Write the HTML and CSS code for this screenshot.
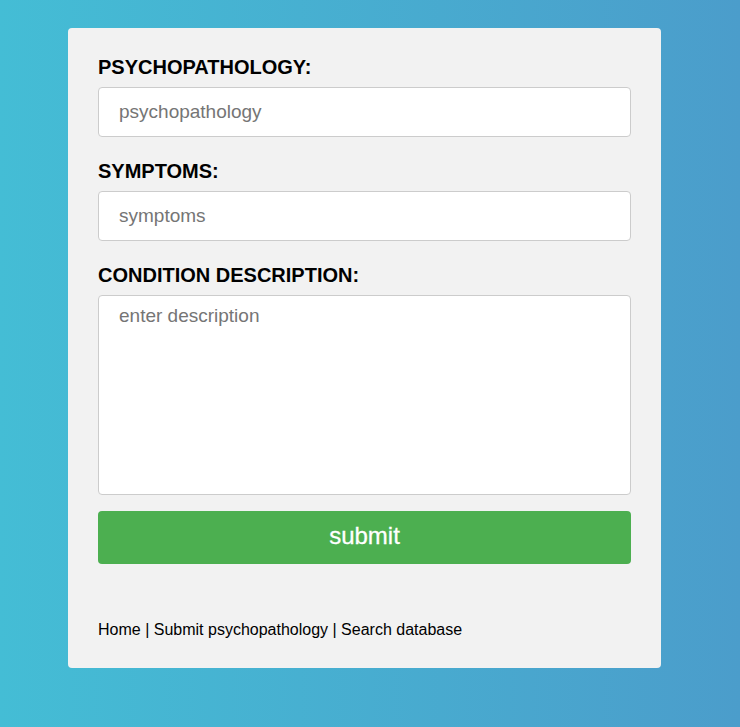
FILE: index.html
```html
<!DOCTYPE html>
<html>
<head>
<meta charset="utf-8">
<link rel="stylesheet" href="styles.css">
</head>
<body>
<div class="card">
  <form class="form">
    <label class="label" for="p">PSYCHOPATHOLOGY:</label>
    <input class="field" id="p" type="text" placeholder="psychopathology">
    <label class="label" for="s">SYMPTOMS:</label>
    <input class="field" id="s" type="text" placeholder="symptoms">
    <label class="label" for="d">CONDITION DESCRIPTION:</label>
    <textarea class="area" id="d" placeholder="enter description"></textarea>
    <button class="btn" type="button">submit</button>
  </form>
  <p class="footer"><a href="#">Home</a> | <a href="#">Submit psychopathology</a> | <a href="#">Search database</a></p>
</div>
</body>
</html>
```
FILE: styles.css
```css
html, body {
  margin: 0;
  min-height: 100%;
}
body {
  font-family: "Liberation Sans", Arial, Helvetica, sans-serif;
  background: linear-gradient(to right, #44bdd5, #4b9dcb);
  min-height: 727px;
  padding: 28px 11px 0 0;
  box-sizing: border-box;
}
.card {
  width: 593px;
  margin: 0 auto;
  box-sizing: border-box;
  background: #f2f2f2;
  border-radius: 4px;
  padding: 28px 30px 29px;
}
.form {
  display: flex;
  flex-direction: column;
}
.label {
  display: block;
  font-size: 20px;
  font-weight: bold;
  line-height: 23px;
  color: #000;
  margin-bottom: 8px;
}
.field {
  height: 50px;
  box-sizing: border-box;
  border: 1px solid #ccc;
  border-radius: 4px;
  background: #fff;
  padding: 0 20px;
  font-family: inherit;
  font-size: 19px;
  margin: 0 0 23px;
  outline: none;
}
.field::placeholder, .area::placeholder {
  color: #757575;
}
.area {
  height: 200px;
  box-sizing: border-box;
  border: 1px solid #ccc;
  border-radius: 4px;
  background: #fff;
  padding: 9px 20px;
  font-family: inherit;
  font-size: 19px;
  resize: none;
  margin: 0 0 16px;
  outline: none;
}
.btn {
  height: 53px;
  border: none;
  border-radius: 4px;
  background: #4caf50;
  color: #fff;
  font-family: inherit;
  font-size: 24px;
  padding: 0 0 3px;
  margin: 0;
  -webkit-text-stroke: 0.3px #fff;
}
.footer {
  margin: 57px 0 0;
  font-size: 16px;
  line-height: 18px;
  color: #000;
}
.footer a {
  color: #000;
  text-decoration: none;
}
```
